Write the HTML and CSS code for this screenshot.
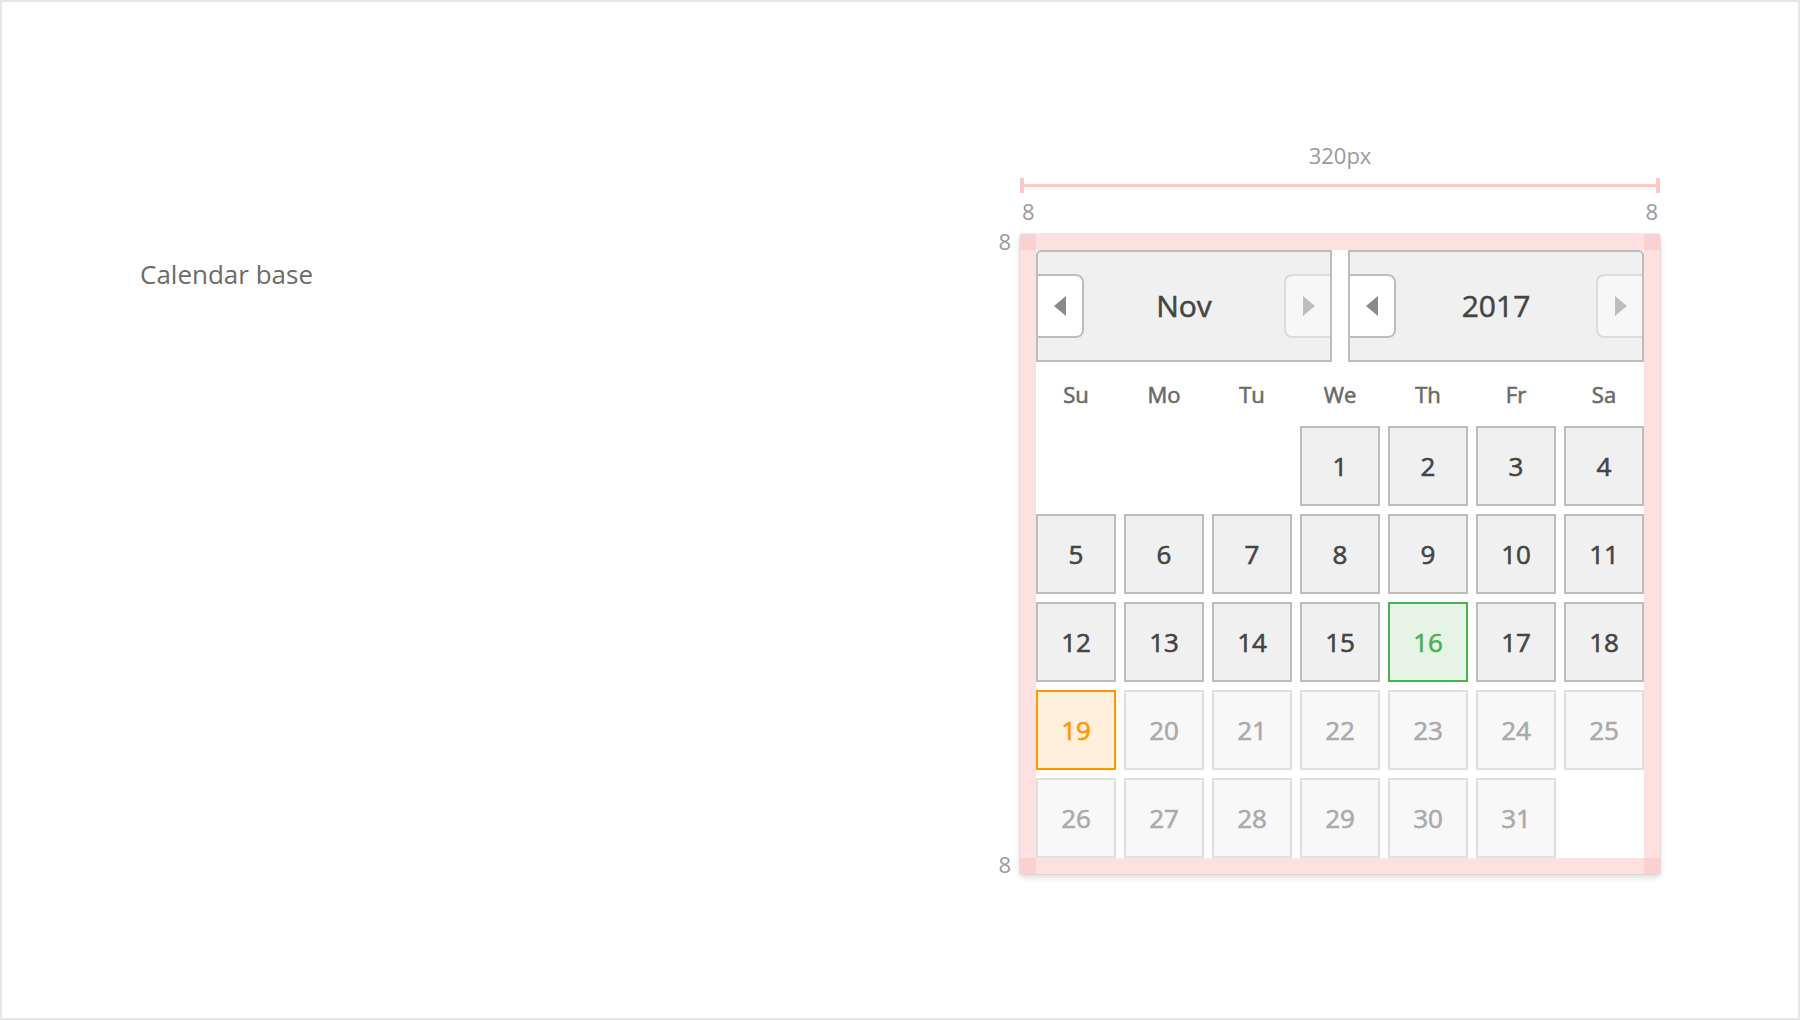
FILE: index.html
```html
<!DOCTYPE html>
<html lang="en">
<head>
<meta charset="utf-8">
<title>Calendar base</title>
<link rel="stylesheet" href="styles.css">
</head>
<body>
<div class="page">
  <div class="title">Calendar base</div>
  <div class="spec">
    <div class="spacer"></div>
    <div class="dim-label">320px</div>
    <div class="spacer"></div>
    <div class="dim"><span class="tick"></span><span class="bar"></span><span class="tick"></span></div>
    <div class="spacer"></div>
    <div class="pad-labels"><span>8</span><span>8</span></div>
    <div class="side-labels"><span>8</span><span>8</span></div>
    <div class="calendar">
      <div class="cal-inner">
        <div class="cal-header">
          <div class="picker picker-month">
            <div class="nav nav-prev"><span class="arrow arrow-left"></span></div>
            <div class="picker-label">Nov</div>
            <div class="nav nav-next nav-disabled"><span class="arrow arrow-right"></span></div>
          </div>
          <div class="picker picker-year">
            <div class="nav nav-prev"><span class="arrow arrow-left"></span></div>
            <div class="picker-label">2017</div>
            <div class="nav nav-next nav-disabled"><span class="arrow arrow-right"></span></div>
          </div>
        </div>
        <div class="weekdays">
          <span>Su</span><span>Mo</span><span>Tu</span><span>We</span><span>Th</span><span>Fr</span><span>Sa</span>
        </div>
        <div class="days">
          <span class="empty"></span><span class="empty"></span><span class="empty"></span>
          <span class="day">1</span><span class="day">2</span><span class="day">3</span><span class="day">4</span>
          <span class="day">5</span><span class="day">6</span><span class="day">7</span><span class="day">8</span><span class="day">9</span><span class="day">10</span><span class="day">11</span>
          <span class="day">12</span><span class="day">13</span><span class="day">14</span><span class="day">15</span><span class="day today">16</span><span class="day">17</span><span class="day">18</span>
          <span class="day selected">19</span><span class="day future">20</span><span class="day future">21</span><span class="day future">22</span><span class="day future">23</span><span class="day future">24</span><span class="day future">25</span>
          <span class="day future">26</span><span class="day future">27</span><span class="day future">28</span><span class="day future">29</span><span class="day future">30</span><span class="day future">31</span><span class="empty"></span>
        </div>
      </div>
    </div>
  </div>
</div>
</body>
</html>
```

FILE: styles.css
```css
html, body {
  margin: 0;
  padding: 0;
  background: #ffffff;
}

body {
  font-family: "Open Sans", "Noto Sans", "Liberation Sans", sans-serif;
}

.page {
  width: 1800px;
  height: 1020px;
  box-sizing: border-box;
  border: 2px solid #e6e6e6;
  display: flex;
  align-items: flex-start;
  overflow: hidden;
}

.title {
  flex: 0 0 850px;
  margin: 254px 0 0 138px;
  font-size: 26px;
  line-height: 36px;
  color: #6b6b6b;
}

.spec {
  margin-top: 144px;
  display: grid;
  grid-template-columns: 30px 640px;
}

.dim-label {
  text-align: center;
  font-size: 22px;
  line-height: 18px;
  height: 18px;
  color: #9a9a9a;
}

.dim {
  margin-top: 14px;
  height: 15px;
  display: flex;
  align-items: center;
}

.tick {
  width: 4px;
  height: 15px;
  background: #fbc8c8;
}

.bar {
  flex: 1;
  height: 3px;
  background: #fbc8c8;
}

.pad-labels {
  margin-top: 9px;
  display: flex;
  justify-content: space-between;
  padding: 0 2px;
  font-size: 22px;
  line-height: 18px;
  height: 18px;
  color: #9a9a9a;
}

.side-labels {
  margin: 13px 0 2px;
  display: flex;
  flex-direction: column;
  justify-content: space-between;
  align-items: flex-end;
  padding-right: 9px;
  font-size: 22px;
  line-height: 16px;
  color: #9a9a9a;
}

.calendar {
  margin-top: 14px;
  width: 640px;
  height: 640px;
  box-sizing: border-box;
  padding: 16px;
  border-radius: 3px;
  background-color: #ffe0e0;
  background-image:
    linear-gradient(#fbd0d0, #fbd0d0),
    linear-gradient(#fbd0d0, #fbd0d0),
    linear-gradient(#fbd0d0, #fbd0d0),
    linear-gradient(#fbd0d0, #fbd0d0);
  background-size: 16px 16px;
  background-repeat: no-repeat;
  background-position: left top, right top, left bottom, right bottom;
  box-shadow: 0 0 0 1px rgba(120, 60, 60, 0.08), 0 3px 6px rgba(0, 0, 0, 0.16);
}

.cal-inner {
  width: 608px;
  height: 608px;
  background: #ffffff;
  display: flex;
  flex-direction: column;
}

.cal-header {
  display: flex;
  gap: 16px;
  height: 112px;
}

.picker {
  flex: 1;
  box-sizing: border-box;
  border: 2px solid #bdbdbd;
  background: #f0f0f0;
  display: flex;
  align-items: center;
}

.picker-month {
  border-top-left-radius: 5px;
}

.picker-year {
  border-top-right-radius: 5px;
}

.picker-label {
  flex: 1;
  text-align: center;
  font-size: 30px;
  line-height: 108px;
  color: #444444;
  -webkit-text-stroke: 0.5px #444444;
}

.nav {
  width: 46px;
  height: 64px;
  box-sizing: border-box;
  display: flex;
  align-items: center;
  justify-content: center;
  background: #ffffff;
  border: 2px solid #bdbdbd;
}

.nav-prev {
  border-left: 0;
  border-radius: 0 8px 8px 0;
  padding-right: 1px;
}

.nav-next {
  border-right: 0;
  border-radius: 8px 0 0 8px;
  padding-left: 1px;
}

.nav-disabled {
  background: #f7f7f7;
  border-color: #dcdcdc;
}

.arrow {
  width: 0;
  height: 0;
  border-top: 10px solid transparent;
  border-bottom: 10px solid transparent;
}

.arrow-left {
  border-right: 12px solid #8a8a8a;
}

.arrow-right {
  border-left: 12px solid #bdbdbd;
}

.weekdays {
  margin-top: 8px;
  height: 48px;
  display: grid;
  grid-template-columns: repeat(7, 80px);
  column-gap: 8px;
  font-size: 22px;
  line-height: 48px;
  color: #6a6a6a;
  -webkit-text-stroke: 0.6px #6a6a6a;
  text-align: center;
}

.days {
  margin-top: 8px;
  display: grid;
  grid-template-columns: repeat(7, 80px);
  grid-auto-rows: 80px;
  gap: 8px;
}

.day {
  box-sizing: border-box;
  border: 2px solid #bdbdbd;
  background: #f0f0f0;
  color: #444444;
  font-size: 26px;
  line-height: 76px;
  text-align: center;
  -webkit-text-stroke: 0.6px currentColor;
}

.day.future {
  background: #f8f8f8;
  border-color: #e0e0e0;
  color: #aaaaaa;
}

.day.today {
  background: #e6f4e6;
  border-color: #4caf50;
  color: #4caf50;
}

.day.selected {
  background: #fff0dc;
  border-color: #ff9800;
  color: #ff9800;
}
```
